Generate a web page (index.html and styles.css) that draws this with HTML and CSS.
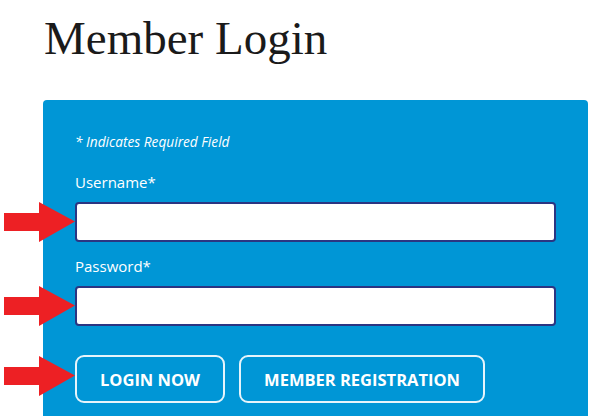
FILE: index.html
```html
<!DOCTYPE html>
<html lang="en">
  <head>
    <meta charset="UTF-8" />
    <meta name="viewport" content="width=device-width, initial-scale=1.0" />
    <title>Member Login</title>
    <link rel="stylesheet" href="styles.css">
  </head>
  <body>
    <h1>Member Login</h1>

    <div class="panel">
      <p class="note">* Indicates Required Field</p>

      <form class="login-form">
        <label for="username">Username*</label>
        <div class="field">
          <span class="arrow"><svg width="71" height="40" viewBox="0 0 71 40"><path d="M0 11H35V0L71 19.5L35 40V29H0Z" fill="#ed2024"/></svg></span>
          <input type="text" id="username" />
        </div>

        <label for="password" class="second">Password*</label>
        <div class="field">
          <span class="arrow"><svg width="71" height="40" viewBox="0 0 71 40"><path d="M0 11H35V0L71 19.5L35 40V29H0Z" fill="#ed2024"/></svg></span>
          <input type="password" id="password" />
        </div>

        <div class="actions">
          <span class="arrow"><svg width="71" height="40" viewBox="0 0 71 40"><path d="M0 11H35V0L71 19.5L35 40V29H0Z" fill="#ed2024"/></svg></span>
          <button type="submit" class="btn">LOGIN NOW</button>
          <button type="button" class="btn">MEMBER REGISTRATION</button>
        </div>
      </form>
    </div>
  </body>
</html>
```

FILE: styles.css
```css
body {
  margin: 0;
  font-family: "Open Sans", Arial, sans-serif;
  background-color: #fff;
  color: #1a1a1a;
}

h1 {
  margin: 0;
  padding: 10px 0 0 44px;
  height: 90px;
  box-sizing: border-box;
  font-family: "Liberation Serif", "Times New Roman", serif;
  font-weight: normal;
  font-size: 47px;
  line-height: 56px;
  color: #1a1a1a;
}

.panel {
  margin-left: 43px;
  margin-top: 10px;
  width: 545px;
  height: 330px;
  box-sizing: border-box;
  padding: 32px 0 0 32px;
  background-color: #0096d6;
  border-radius: 4px 4px 0 0;
  color: #fff;
}

.note {
  margin: 0 0 20px;
  font-size: 13.7px;
  font-style: italic;
  line-height: 20px;
}

label {
  display: block;
  font-size: 15px;
  line-height: 20px;
  margin-bottom: 10px;
}

label.second {
  margin-top: 14px;
}

.field,
.actions {
  position: relative;
}

.arrow {
  position: absolute;
  left: -71px;
  top: 0;
  line-height: 0;
}

.actions .arrow {
  top: 1px;
}

input {
  display: block;
  width: 481px;
  height: 40px;
  box-sizing: border-box;
  border: 2px solid #2b3582;
  border-radius: 4px;
  background-color: #fff;
  margin: 0;
}

.actions {
  display: flex;
  gap: 14px;
  margin-top: 29px;
}

.btn {
  height: 48px;
  padding: 0 23px;
  background-color: transparent;
  border: 2px solid #e6f4fb;
  border-radius: 9px;
  color: #fff;
  font-family: "Open Sans", Arial, sans-serif;
  font-weight: bold;
  font-size: 16.5px;
  cursor: pointer;
}
```
